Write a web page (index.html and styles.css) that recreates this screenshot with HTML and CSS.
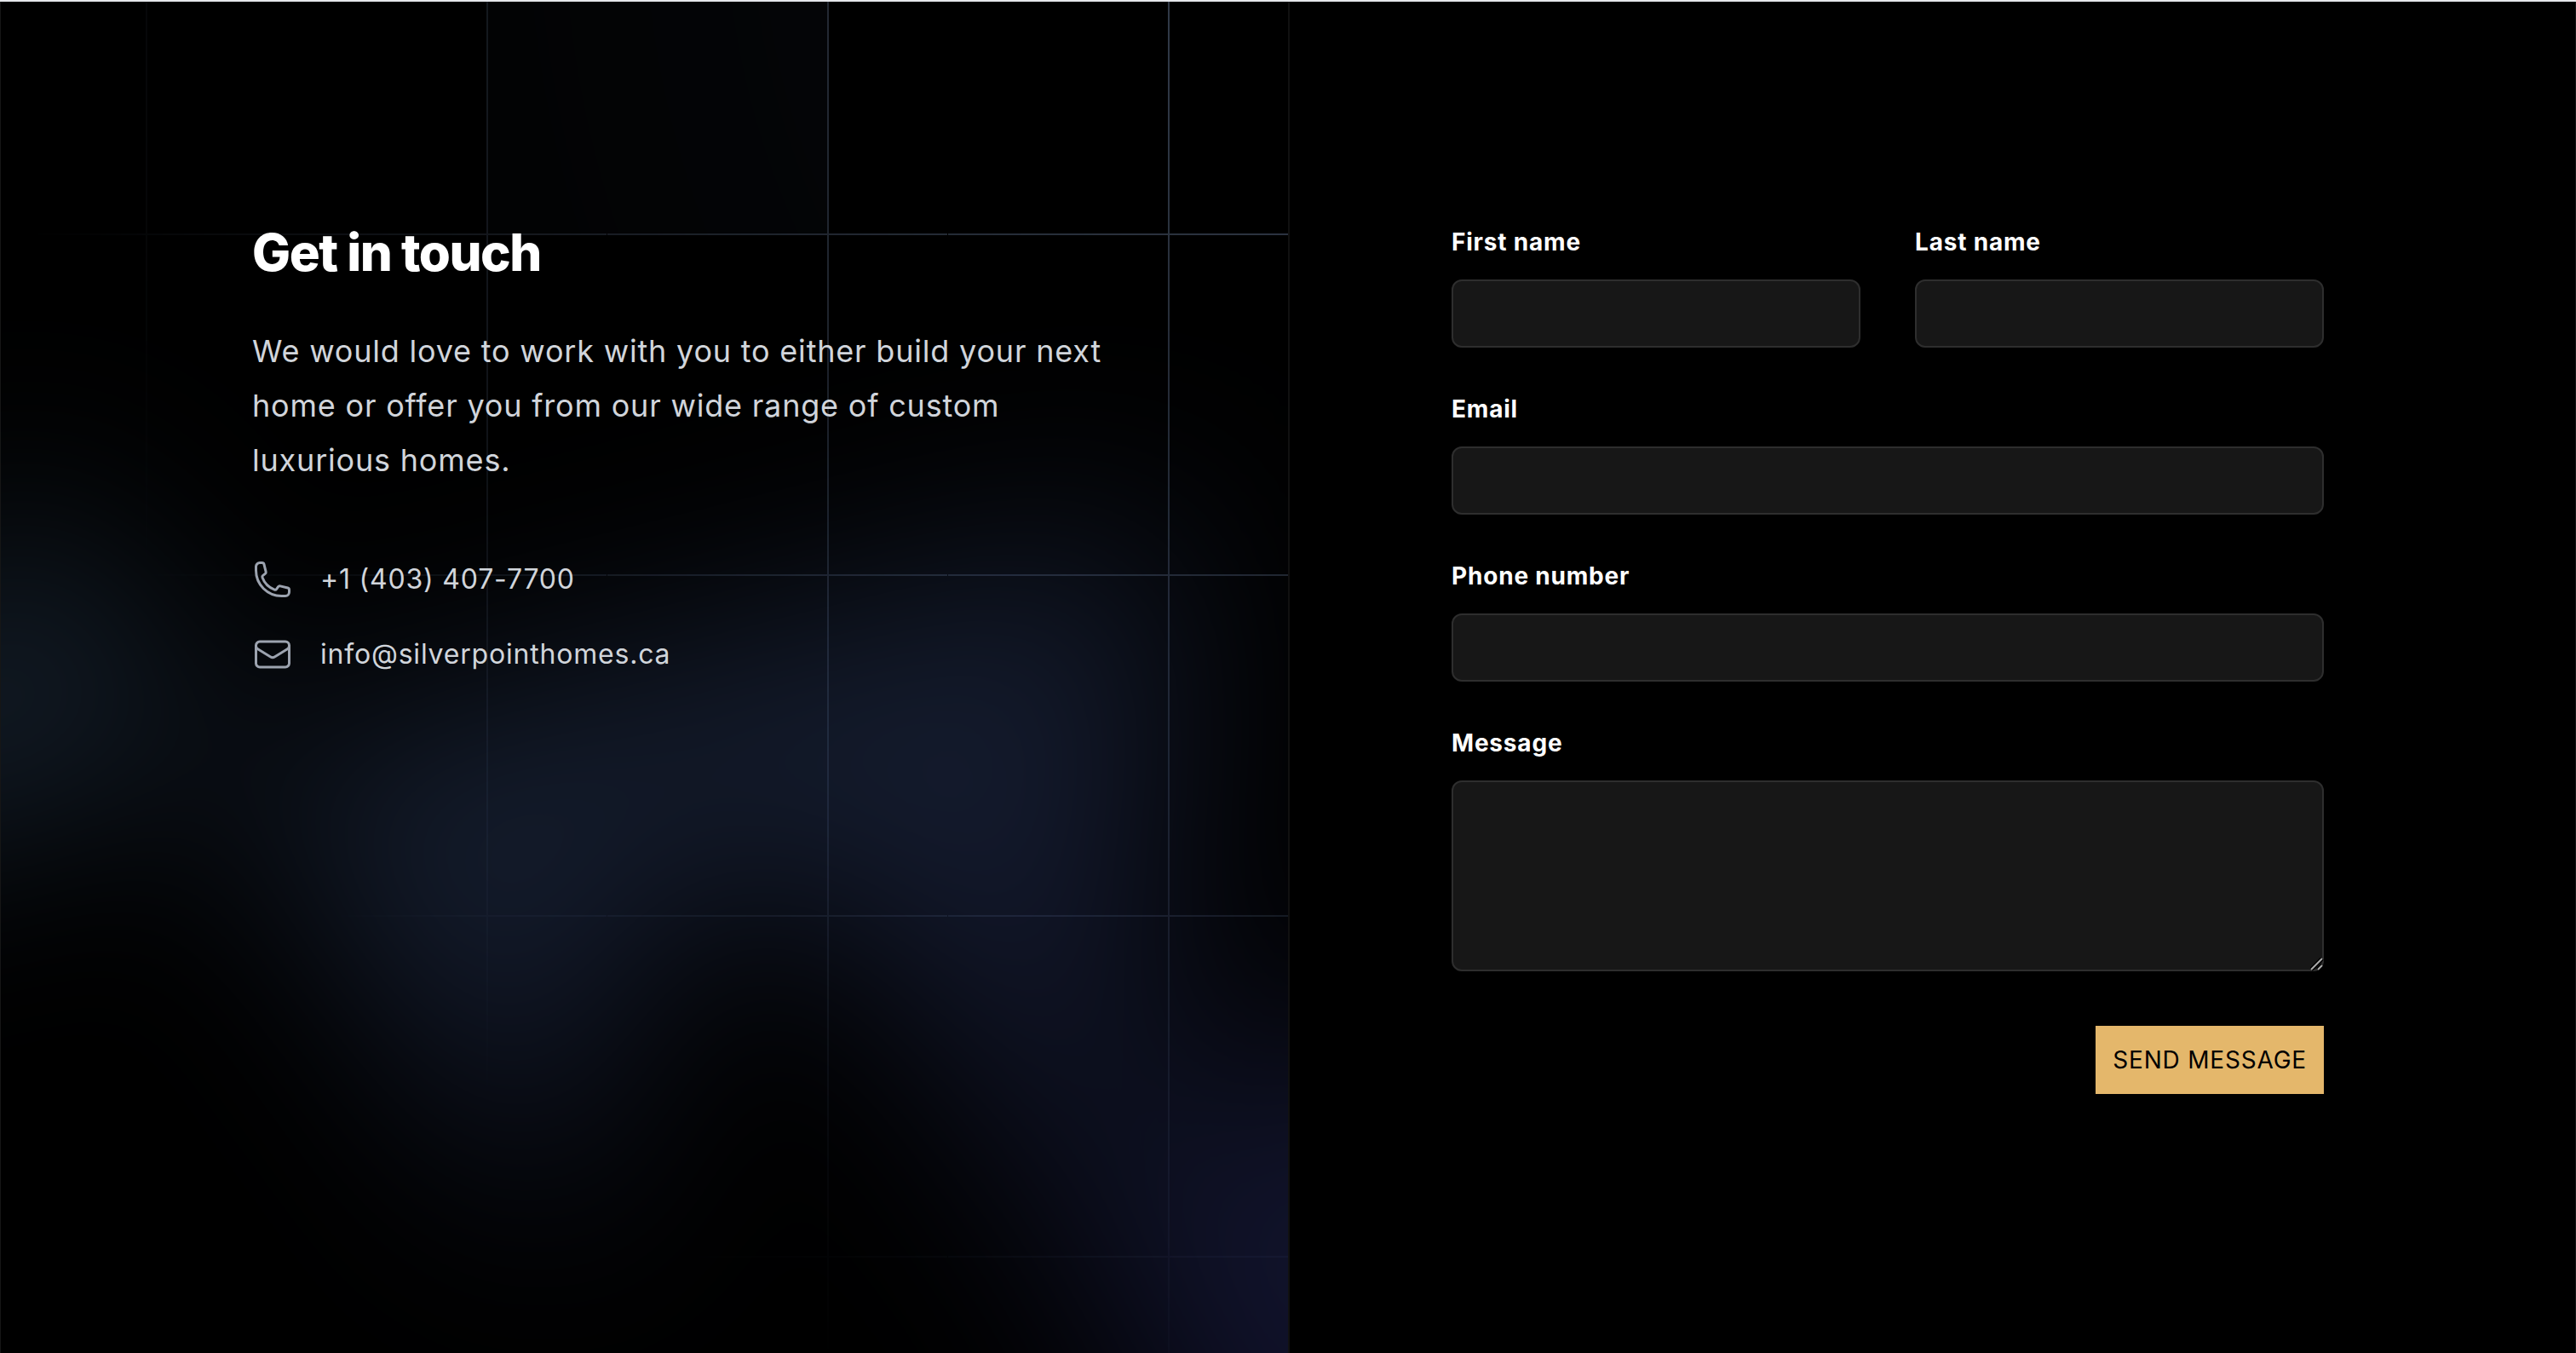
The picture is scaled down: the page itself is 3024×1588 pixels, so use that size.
FILE: index.html
```html
<!DOCTYPE html>
<html lang="en">
<head>
  <meta charset="UTF-8" />
  <title>Contact</title>
  <meta name="viewport" content="width=device-width, initial-scale=1.0" />
  <link rel="stylesheet" href="styles.css">
</head>
<body>
  <main class="contact">
    <!-- Left half background: grid lines and glow -->
    <div class="backdrop" aria-hidden="true">
      <svg class="grid-lines">
        <defs>
          <pattern id="grid" width="400" height="400" x="100%" y="-2" patternUnits="userSpaceOnUse">
            <path d="M260 400V1M1 1H400" fill="none" stroke="#374151" stroke-width="2" />
          </pattern>
        </defs>
        <svg class="grid-tile" x="100%" y="-2">
          <path d="M-941 0h402v402h-402Z" fill="#1f2937" fill-opacity="0.2" />
        </svg>
        <rect width="100%" height="100%" fill="url(#grid)" />
      </svg>
      <div class="glow"><div class="glow-shape"></div></div>
    </div>

    <div class="container">
      <section class="info">
        <h2>Get in touch</h2>
        <p>We would love to work with you to either build your next home or offer you from our wide range of custom luxurious homes.</p>
        <ul class="details">
          <li>
            <svg class="icon" viewBox="0 0 24 24" fill="none" stroke="currentColor" stroke-width="1.5" stroke-linecap="round" stroke-linejoin="round" aria-hidden="true">
              <path d="M2.25 6.75c0 8.284 6.716 15 15 15h2.25a2.25 2.25 0 002.25-2.25v-1.372c0-.516-.351-.966-.852-1.091l-4.423-1.106c-.44-.11-.902.055-1.173.417l-.97 1.293c-.282.376-.769.542-1.21.38a12.035 12.035 0 01-7.143-7.143c-.162-.441.004-.928.38-1.21l1.293-.97c.363-.271.527-.734.417-1.173L6.963 3.102a1.125 1.125 0 00-1.091-.852H4.5A2.25 2.25 0 002.25 4.5v2.25z" />
            </svg>
            <a href="tel:+14034077700">+1 (403) 407-7700</a>
          </li>
          <li>
            <svg class="icon" viewBox="0 0 24 24" fill="none" stroke="currentColor" stroke-width="1.5" stroke-linecap="round" stroke-linejoin="round" aria-hidden="true">
              <path d="M21.75 6.75v10.5a2.25 2.25 0 01-2.25 2.25h-15a2.25 2.25 0 01-2.25-2.25V6.75m19.5 0A2.25 2.25 0 0019.5 4.5h-15a2.25 2.25 0 00-2.25 2.25m19.5 0v.243a2.25 2.25 0 01-1.07 1.916l-7.5 4.615a2.25 2.25 0 01-2.36 0L3.32 8.91a2.25 2.25 0 01-1.07-1.916V6.75" />
            </svg>
            <a href="mailto:info@silverpointhomes.ca">info@silverpointhomes.ca</a>
          </li>
        </ul>
      </section>

      <form class="form">
        <div class="field">
          <label for="first-name">First name</label>
          <input type="text" id="first-name" name="first-name" autocomplete="given-name" />
        </div>
        <div class="field">
          <label for="last-name">Last name</label>
          <input type="text" id="last-name" name="last-name" autocomplete="family-name" />
        </div>
        <div class="field wide">
          <label for="email">Email</label>
          <input type="email" id="email" name="email" autocomplete="email" />
        </div>
        <div class="field wide">
          <label for="phone">Phone number</label>
          <input type="tel" id="phone" name="phone" autocomplete="tel" />
        </div>
        <div class="field wide">
          <label for="message">Message</label>
          <div class="message-box">
            <textarea id="message" name="message" rows="4"></textarea>
            <svg class="grip" viewBox="0 0 16 16" fill="none" aria-hidden="true">
              <path d="M1 14L14 1M9 14L14 9" stroke="#000" stroke-width="5" />
              <path d="M1 14L14 1M9 14L14 9" stroke="#aaa" stroke-width="2" />
            </svg>
          </div>
        </div>
        <div class="actions wide">
          <button type="submit">Send message</button>
        </div>
      </form>
    </div>
  </main>
</body>
</html>
```

FILE: styles.css
```css
* {
  box-sizing: border-box;
}
body {
  margin: 0;
  background: #000;
  color: #fff;
  font-family: Inter, "Liberation Sans", sans-serif;
  font-size: 32px;
  letter-spacing: 0.025em;
}
.contact {
  position: relative;
  min-height: 100vh;
  overflow: hidden;
  border-top: 2px solid #e5e7eb;
  background: #000;
}
.contact::after {
  content: "";
  position: absolute;
  inset: 0;
  border: solid #161616;
  border-width: 0 1px;
  pointer-events: none;
}

/* Background */
.backdrop {
  position: absolute;
  top: -126px;
  bottom: -128px;
  left: 0;
  width: 50%;
  overflow: hidden;
  box-shadow: 0 0 0 2px #111;
}
.grid-lines {
  position: absolute;
  inset: 0;
  width: 100%;
  height: 100%;
  -webkit-mask-image: radial-gradient(100% 100% at top right, #fff, transparent);
  mask-image: radial-gradient(100% 100% at top right, #fff, transparent);
}
.grid-tile {
  overflow: visible;
}
.glow {
  position: absolute;
  top: calc(50% - 224px);
  left: max(-448px, calc(100% - 1888px));
  filter: blur(128px);
}
.glow-shape {
  width: 2310px;
  aspect-ratio: 1155 / 678;
  background: linear-gradient(to bottom right, #80caff, #4f46e5);
  opacity: 0.19;
  clip-path: polygon(74.1% 56.1%, 100% 38.6%, 97.5% 73.3%, 85.5% 100%, 80.7% 98.2%, 72.5% 67.7%, 60.2% 37.8%, 52.4% 32.2%, 47.5% 41.9%, 45.2% 65.8%, 27.5% 23.5%, 0.1% 35.4%, 17.9% 0.1%, 27.6% 23.5%, 76.1% 2.6%, 74.1% 56.1%);
}

/* Content */
.container {
  position: relative;
  display: grid;
  grid-template-columns: 1fr 1fr;
  max-width: 2560px;
  margin: 0 auto;
  padding: 258px 64px 300px;
}
.info {
  max-width: 1024px;
}
h2 {
  margin: 0;
  font-size: 60px;
  line-height: 72px;
  font-weight: 800;
  letter-spacing: -0.025em;
}
.info p {
  margin: 48px 0 0;
  font-size: 36px;
  line-height: 64px;
  color: #d1d5db;
}
.details {
  display: grid;
  gap: 32px;
  margin: 80px 0 0;
  padding: 0;
  list-style: none;
  font-size: 32px;
  line-height: 56px;
}
.details li {
  display: flex;
  gap: 32px;
}
.details a {
  color: #d1d5db;
  text-decoration: none;
}
.icon {
  width: 48px;
  height: 56px;
  color: #9ca3af;
}

/* Form */
.form {
  display: grid;
  grid-template-columns: 1fr 1fr;
  gap: 48px 64px;
  width: 100%;
  max-width: 1024px;
  justify-self: end;
}
.wide {
  grid-column: 1 / -1;
}
label {
  display: block;
  margin-bottom: 20px;
  font-size: 28px;
  line-height: 48px;
  font-weight: 700;
}
input, textarea {
  display: block;
  width: 100%;
  padding: 14px 26px;
  border: 2px solid #2e2e2e;
  border-radius: 12px;
  background: #171717;
  color: #fff;
  font: inherit;
  font-size: 28px;
  line-height: 48px;
}
input {
  height: 80px;
}
textarea {
  resize: none;
}
.message-box {
  position: relative;
}
.grip {
  position: absolute;
  right: 0;
  bottom: 0;
  width: 16px;
  height: 16px;
}
.actions {
  display: flex;
  justify-content: flex-end;
  padding-top: 16px;
}
button {
  padding: 16px 20px;
  border: none;
  background: #e4b76b;
  color: #000;
  font: inherit;
  font-size: 28px;
  line-height: 48px;
  letter-spacing: inherit;
  text-transform: uppercase;
  cursor: pointer;
}
```
